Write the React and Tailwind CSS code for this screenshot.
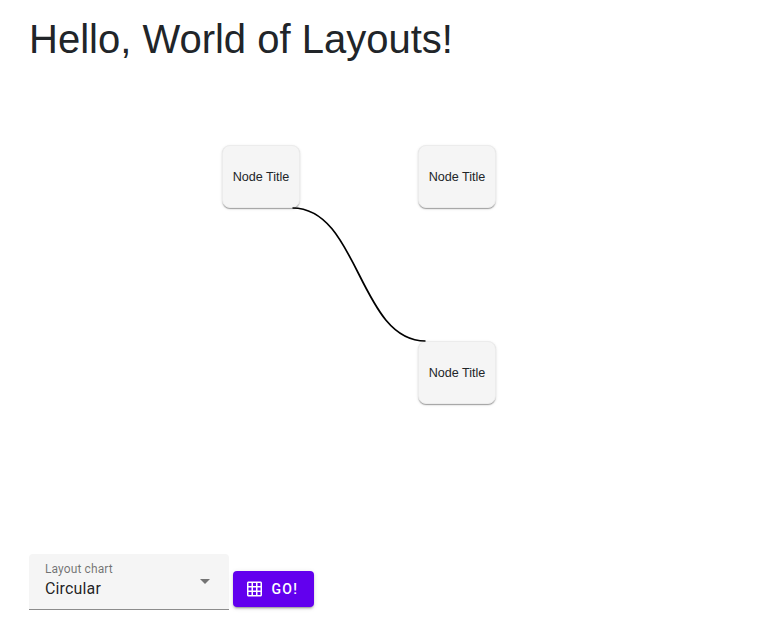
import React from "react";

function Node({ className }) {
  return (
    <div
      className={`absolute flex h-[63px] w-[78px] items-center justify-center rounded-[8px] border border-[#ececec] bg-[#f5f5f5] text-[12.6px] leading-5 whitespace-nowrap text-[#212529] shadow-[0_2px_1px_-1px_rgba(0,0,0,0.2),0_1px_1px_0_rgba(0,0,0,0.14),0_1px_3px_0_rgba(0,0,0,0.12)] ${className}`}
    >
      Node Title
    </div>
  );
}

export default function App() {
  return (
    <main className="flex h-[621px] w-full flex-col overflow-hidden bg-white pt-[15px] pl-[29px] font-['Liberation_Sans',Arial,sans-serif] text-[#212529]">
      <h1 className="h-12 text-[40px] leading-[48px] font-normal whitespace-nowrap">
        Hello, World of Layouts!
      </h1>
      <div className="relative h-[491px]">
        <Node className="top-[82px] left-[193px]" />
        <Node className="top-[82px] left-[389px]" />
        <Node className="top-[278px] left-[389px]" />
        <svg className="absolute top-0 left-0 h-full w-[700px]" viewBox="29 63 700 491" fill="none">
          <path d="M292.5 208C359 208 359 341 425.5 341" stroke="#000" strokeWidth="1.7" />
        </svg>
      </div>
      <div className="flex gap-1 font-[Roboto,sans-serif]">
        <div className="flex h-14 w-[200px] items-center justify-between rounded-t-[4px] border-b border-[#8c8c8c] bg-[#f5f5f5] pr-[19px] pl-4">
          <div className="pb-[2px]">
            <div className="h-4 text-[12px] leading-4 tracking-[0.1px] text-black/55">Layout chart</div>
            <div className="h-6 text-base leading-6 tracking-[0.15px] text-black/87">Circular</div>
          </div>
          <svg className="h-[5px] w-[10px]" viewBox="0 0 10 5">
            <path d="M0 0h10L5 5z" fill="#747474" />
          </svg>
        </div>
        <button className="mt-[17px] flex h-9 w-[81px] items-center rounded-[4px] bg-[#6200ee] pl-[12.5px] text-[14px] leading-9 font-medium tracking-[1.25px] text-white shadow-[0_3px_1px_-2px_rgba(0,0,0,0.2),0_2px_2px_0_rgba(0,0,0,0.14),0_1px_5px_0_rgba(0,0,0,0.12)]">
          <svg className="mr-2 h-[18px] w-[18px]" viewBox="0.67 0 24 24" fill="currentColor">
            <path d="M20 2H4c-1.1 0-2 .9-2 2v16c0 1.1.9 2 2 2h16c1.1 0 2-.9 2-2V4c0-1.1-.9-2-2-2zM8 20H4v-4h4v4zm0-6H4v-4h4v4zm0-6H4V4h4v4zm6 12h-4v-4h4v4zm0-6h-4v-4h4v4zm0-6h-4V4h4v4zm6 12h-4v-4h4v4zm0-6h-4v-4h4v4zm0-6h-4V4h4v4z" />
          </svg>
          GO!
        </button>
      </div>
    </main>
  );
}
